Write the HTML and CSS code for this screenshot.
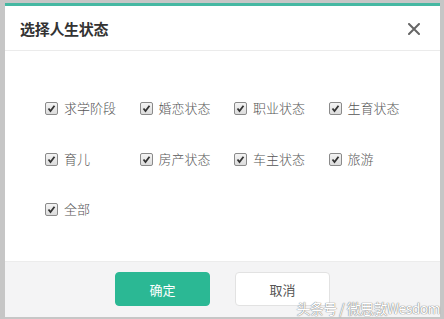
FILE: index.html
```html
<!DOCTYPE html>
<html lang="zh">
<head>
<meta charset="utf-8">
<link rel="stylesheet" href="styles.css">
</head>
<body>
<div class="dialog">
  <div class="header">
    <span class="title">选择人生状态</span>
    <span class="close">
      <svg width="12" height="12" viewBox="0 0 12 12"><path d="M1 1L11 11M11 1L1 11" stroke="#666" stroke-width="2" stroke-linecap="round"/></svg>
    </span>
  </div>
  <div class="content">
    <div class="grid">
      <label class="item"><span class="cb"><svg viewBox="0 0 11 11"><path d="M2.5 5.5L4.5 8L8.5 2.8" fill="none" stroke="#333" stroke-width="1.8"/></svg></span>求学阶段</label>
      <label class="item"><span class="cb"><svg viewBox="0 0 11 11"><path d="M2.5 5.5L4.5 8L8.5 2.8" fill="none" stroke="#333" stroke-width="1.8"/></svg></span>婚恋状态</label>
      <label class="item"><span class="cb"><svg viewBox="0 0 11 11"><path d="M2.5 5.5L4.5 8L8.5 2.8" fill="none" stroke="#333" stroke-width="1.8"/></svg></span>职业状态</label>
      <label class="item"><span class="cb"><svg viewBox="0 0 11 11"><path d="M2.5 5.5L4.5 8L8.5 2.8" fill="none" stroke="#333" stroke-width="1.8"/></svg></span>生育状态</label>
      <label class="item"><span class="cb"><svg viewBox="0 0 11 11"><path d="M2.5 5.5L4.5 8L8.5 2.8" fill="none" stroke="#333" stroke-width="1.8"/></svg></span>育儿</label>
      <label class="item"><span class="cb"><svg viewBox="0 0 11 11"><path d="M2.5 5.5L4.5 8L8.5 2.8" fill="none" stroke="#333" stroke-width="1.8"/></svg></span>房产状态</label>
      <label class="item"><span class="cb"><svg viewBox="0 0 11 11"><path d="M2.5 5.5L4.5 8L8.5 2.8" fill="none" stroke="#333" stroke-width="1.8"/></svg></span>车主状态</label>
      <label class="item"><span class="cb"><svg viewBox="0 0 11 11"><path d="M2.5 5.5L4.5 8L8.5 2.8" fill="none" stroke="#333" stroke-width="1.8"/></svg></span>旅游</label>
      <label class="item"><span class="cb"><svg viewBox="0 0 11 11"><path d="M2.5 5.5L4.5 8L8.5 2.8" fill="none" stroke="#333" stroke-width="1.8"/></svg></span>全部</label>
    </div>
  </div>
  <div class="footer">
    <button class="btn primary">确定</button>
    <button class="btn">取消</button>
    <span class="watermark">头条号 / 微思敦Wesdom</span>
  </div>
</div>
</body>
</html>
```

FILE: styles.css
```css
html, body {
  margin: 0;
  padding: 0;
}
body {
  width: 444px;
  height: 319px;
  background: #c6c6c6;
  font-family: "Noto Sans CJK SC", "Noto Sans", sans-serif;
  overflow: hidden;
  padding-top: 3px;
  box-sizing: border-box;
}
.dialog {
  margin-left: 5px;
  width: 435px;
  height: 314px;
  background: #fff;
  border-top: 3px solid #45b8a2;
  box-sizing: border-box;
  display: flex;
  flex-direction: column;
}
.header {
  height: 45px;
  border-bottom: 1px solid #ebebeb;
  display: flex;
  align-items: center;
  justify-content: space-between;
  padding: 0 20px 0 15px;
  box-sizing: border-box;
  flex: none;
}
.title {
  font-size: 15px;
  font-weight: bold;
  color: #333;
  letter-spacing: -0.3px;
}
.close {
  display: flex;
  align-items: center;
  padding-top: 2px;
}
.content {
  flex: 1;
  padding: 48px 0 0 40px;
  box-sizing: border-box;
}
.grid {
  display: grid;
  grid-template-columns: repeat(4, 94.5px);
  grid-auto-rows: 50.5px;
}
.item {
  display: flex;
  align-items: flex-start;
  font-size: 13px;
  font-weight: 300;
  color: #555;
  line-height: 18px;
  height: 18px;
}
.cb {
  width: 11px;
  height: 11px;
  border: 1px solid #8a8a8a;
  border-radius: 2px;
  background: linear-gradient(#f4f4f4, #dcdcdc);
  margin: 3px 6px 0 0;
  display: flex;
}
.cb svg {
  width: 11px;
  height: 11px;
}
.footer {
  height: 56px;
  flex: none;
  background: #f4f4f5;
  border-top: 1px solid #ececec;
  box-sizing: border-box;
  display: flex;
  align-items: flex-start;
  padding: 10px 0 0 110px;
  gap: 25px;
  position: relative;
}
.btn {
  width: 95px;
  height: 34px;
  border-radius: 4px;
  border: 1px solid #e2e2e2;
  background: #fff;
  color: #555;
  font-family: "Noto Sans CJK SC", "Noto Sans", sans-serif;
  font-size: 13px;
  padding: 0;
}
.btn.primary {
  background: #2bb894;
  border-color: #2bb894;
  color: #fff;
}
.watermark {
  position: absolute;
  right: 0;
  bottom: 0;
  font-size: 14px;
  line-height: 17px;
  color: #fff;
  text-shadow: 0 0 1px #777, 0 0 1px #777;
  letter-spacing: -0.6px;
}
```
